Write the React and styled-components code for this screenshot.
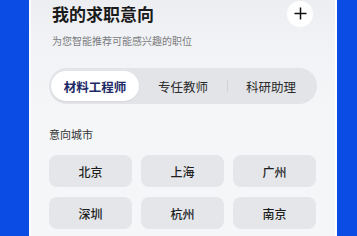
import React, { useState } from 'react';
import styled, { createGlobalStyle } from 'styled-components';

const GlobalStyle = createGlobalStyle`
  html, body {
    margin: 0;
    padding: 0;
    background: #0b4ce4;
    font-family: "Noto Sans CJK SC", "Noto Sans", sans-serif;
  }
`;

const Page = styled.div`
  width: 357px;
  height: 236px;
  overflow: hidden;
  background: #0b4ce4;
  display: flex;
`;

const Card = styled.div`
  margin-left: 29px;
  width: 308px;
  height: 236px;
  box-sizing: border-box;
  border-left: 2px solid #ffffff;
  border-right: 2px solid #ffffff;
  background: linear-gradient(180deg, #eceef2 0px, #f1f2f5 40px, #f5f6f8 110px, #f5f6f8 100%);
  padding: 0 18px;
  display: flex;
  flex-direction: column;
`;

const HeaderRow = styled.div`
  height: 27px;
  display: flex;
  align-items: center;
  justify-content: space-between;
`;

const Title = styled.h2`
  margin: 0 0 0 3px;
  font-size: 17px;
  font-weight: 700;
  color: #1a1a1a;
  line-height: 1;
`;

const AddButton = styled.div`
  width: 26px;
  height: 26px;
  margin-right: 4px;
  border-radius: 50%;
  background: #ffffff;
  display: flex;
  align-items: center;
  justify-content: center;
`;

const Subtitle = styled.p`
  margin: 7px 0 0 3px;
  font-size: 10px;
  line-height: 14px;
  color: #7a7c80;
`;

const Segmented = styled.div`
  margin-top: 20px;
  height: 36px;
  padding: 3px 2px;
  box-sizing: border-box;
  border-radius: 18px;
  background: #e2e4e8;
  display: grid;
  grid-template-columns: 1fr 1fr 1fr;
`;

const Tab = styled.div`
  position: relative;
  display: flex;
  align-items: center;
  justify-content: center;
  border-radius: 16px;
  font-size: 12.5px;
  font-weight: ${p => (p.$active ? 600 : 400)};
  color: ${p => (p.$active ? '#1e2a66' : '#2b2b2b')};
  background: ${p => (p.$active ? '#ffffff' : 'transparent')};
  box-shadow: ${p => (p.$active ? '0 1px 2px rgba(0,0,0,0.06)' : 'none')};

  ${p => p.$divider && `
    &::before {
      content: '';
      position: absolute;
      left: 0;
      top: 9px;
      bottom: 9px;
      width: 1px;
      background: #cfd2d7;
    }
  `}
`;

const Label = styled.div`
  margin-top: 24px;
  font-size: 11px;
  line-height: 13px;
  color: #333333;
`;

const CityGrid = styled.div`
  margin-top: 14px;
  display: grid;
  grid-template-columns: repeat(3, 83px);
  grid-auto-rows: 32px;
  column-gap: 9px;
  row-gap: 10px;
`;

const CityChip = styled.div`
  display: flex;
  align-items: center;
  justify-content: center;
  border-radius: 8px;
  background: #e4e6ea;
  font-size: 12px;
  font-weight: 500;
  color: #1f1f1f;
`;

const tabs = ['材料工程师', '专任教师', '科研助理'];
const cities = ['北京', '上海', '广州', '深圳', '杭州', '南京'];

export default function App() {
  const [active, setActive] = useState(0);

  return (
    <Page>
      <GlobalStyle />
      <Card>
        <HeaderRow>
          <Title>我的求职意向</Title>
          <AddButton>
            <svg width="13" height="13" viewBox="0 0 13 13">
              <path d="M6.5 0.5v12M0.5 6.5h12" stroke="#111" strokeWidth="1.5" />
            </svg>
          </AddButton>
        </HeaderRow>
        <Subtitle>为您智能推荐可能感兴趣的职位</Subtitle>
        <Segmented>
          {tabs.map((t, i) => (
            <Tab
              key={t}
              $active={i === active}
              $divider={i === 2 && active !== 1 && active !== 2}
              onClick={() => setActive(i)}
            >
              {t}
            </Tab>
          ))}
        </Segmented>
        <Label>意向城市</Label>
        <CityGrid>
          {cities.map(c => (
            <CityChip key={c}>{c}</CityChip>
          ))}
        </CityGrid>
      </Card>
    </Page>
  );
}
